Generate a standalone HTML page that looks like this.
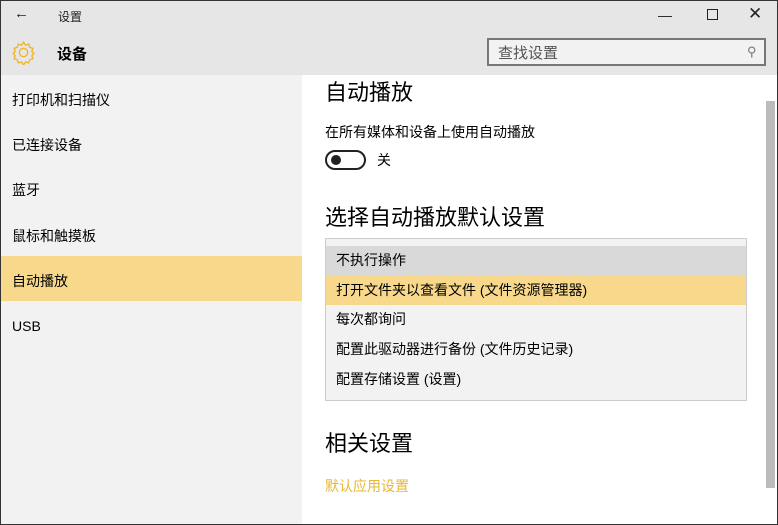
<!DOCTYPE html><html><head><meta charset="utf-8"><style>
*{margin:0;padding:0;box-sizing:border-box}
body{width:778px;height:525px;overflow:hidden;font-family:"Liberation Sans","Noto Sans CJK SC",sans-serif;background:#fff;position:relative;color:#000}
.a{position:absolute}
</style></head><body>
<div class="a" style="left:0;top:0;width:778px;height:75px;background:#e6e6e6"></div>
<div class="a" style="left:14px;top:5px;font-size:15px;color:#222">←</div>
<div class="a" style="left:58px;top:8px;font-size:12px;color:#222">设置</div>
<div class="a" style="left:658px;top:7px;font-size:14px;color:#222">—</div>
<div class="a" style="left:707px;top:9px;width:11px;height:11px;border:1px solid #222"></div>
<div class="a" style="left:748px;top:4px;font-size:17px;color:#222">✕</div>
<svg class="a" style="left:11px;top:40px" width="25" height="25" viewBox="0 0 24 24"><path d="M12 2l2 3 3-1 1 3 3 1-1 3 2 2-2 2 1 3-3 1-1 3-3-1-2 3-2-3-3 1-1-3-3-1 1-3-2-2 2-2-1-3 3-1 1-3 3 1z" fill="none" stroke="#f0b429" stroke-width="1.3"/><circle cx="12" cy="12" r="4" fill="none" stroke="#f0b429" stroke-width="1.3"/></svg>
<div class="a" style="left:57px;top:43px;font-size:15px;font-weight:bold">设备</div>
<div class="a" style="left:487px;top:38px;width:279px;height:28px;border:2px solid #777;background:#f2f2f2"></div>
<div class="a" style="left:498px;top:42px;font-size:15px;color:#555">查找设置</div>
<div class="a" style="left:747px;top:44px;font-size:13px;color:#777">⚲</div>
<div class="a" style="left:0;top:75px;width:302px;height:450px;background:#f2f2f2"></div>
<div class="a" style="left:0;top:256px;width:302px;height:45px;background:#f8d98c"></div>
<div class="a" style="left:12px;top:90px;font-size:14px;line-height:20px">打印机和扫描仪</div>
<div class="a" style="left:12px;top:135px;font-size:14px;line-height:20px">已连接设备</div>
<div class="a" style="left:12px;top:180px;font-size:14px;line-height:20px">蓝牙</div>
<div class="a" style="left:12px;top:226px;font-size:14px;line-height:20px">鼠标和触摸板</div>
<div class="a" style="left:12px;top:271px;font-size:14px;line-height:20px">自动播放</div>
<div class="a" style="left:12px;top:316px;font-size:14px;line-height:20px">USB</div>
<div class="a" style="left:325px;top:78px;font-size:22px;line-height:30px">自动播放</div>
<div class="a" style="left:325px;top:122px;font-size:14px;line-height:20px">在所有媒体和设备上使用自动播放</div>
<div class="a" style="left:325px;top:150px;width:41px;height:20px;border:2px solid #222;border-radius:10px"></div>
<div class="a" style="left:331px;top:155px;width:10px;height:10px;border-radius:5px;background:#222"></div>
<div class="a" style="left:377px;top:150px;font-size:14px;line-height:20px">关</div>
<div class="a" style="left:325px;top:203px;font-size:22px;line-height:30px">选择自动播放默认设置</div>
<div class="a" style="left:325px;top:238px;width:422px;height:163px;background:#f2f2f2;border:1px solid #ccc"></div>
<div class="a" style="left:326px;top:246px;width:420px;height:29px;background:#d9d9d9"></div>
<div class="a" style="left:326px;top:275px;width:420px;height:30px;background:#f8d98c"></div>
<div class="a" style="left:336px;top:250px;font-size:14px;line-height:20px">不执行操作</div>
<div class="a" style="left:336px;top:280px;font-size:14px;line-height:20px">打开文件夹以查看文件 (文件资源管理器)</div>
<div class="a" style="left:336px;top:309px;font-size:14px;line-height:20px">每次都询问</div>
<div class="a" style="left:336px;top:339px;font-size:14px;line-height:20px">配置此驱动器进行备份 (文件历史记录)</div>
<div class="a" style="left:336px;top:369px;font-size:14px;line-height:20px">配置存储设置 (设置)</div>
<div class="a" style="left:325px;top:429px;font-size:22px;line-height:30px">相关设置</div>
<div class="a" style="left:325px;top:476px;font-size:14px;line-height:20px;color:#e8b830">默认应用设置</div>
<div class="a" style="left:766px;top:101px;width:9px;height:387px;background:#bcbcbc"></div>
<div class="a" style="left:0;top:0;width:778px;height:525px;border:1px solid #333;pointer-events:none"></div>
</body></html>
